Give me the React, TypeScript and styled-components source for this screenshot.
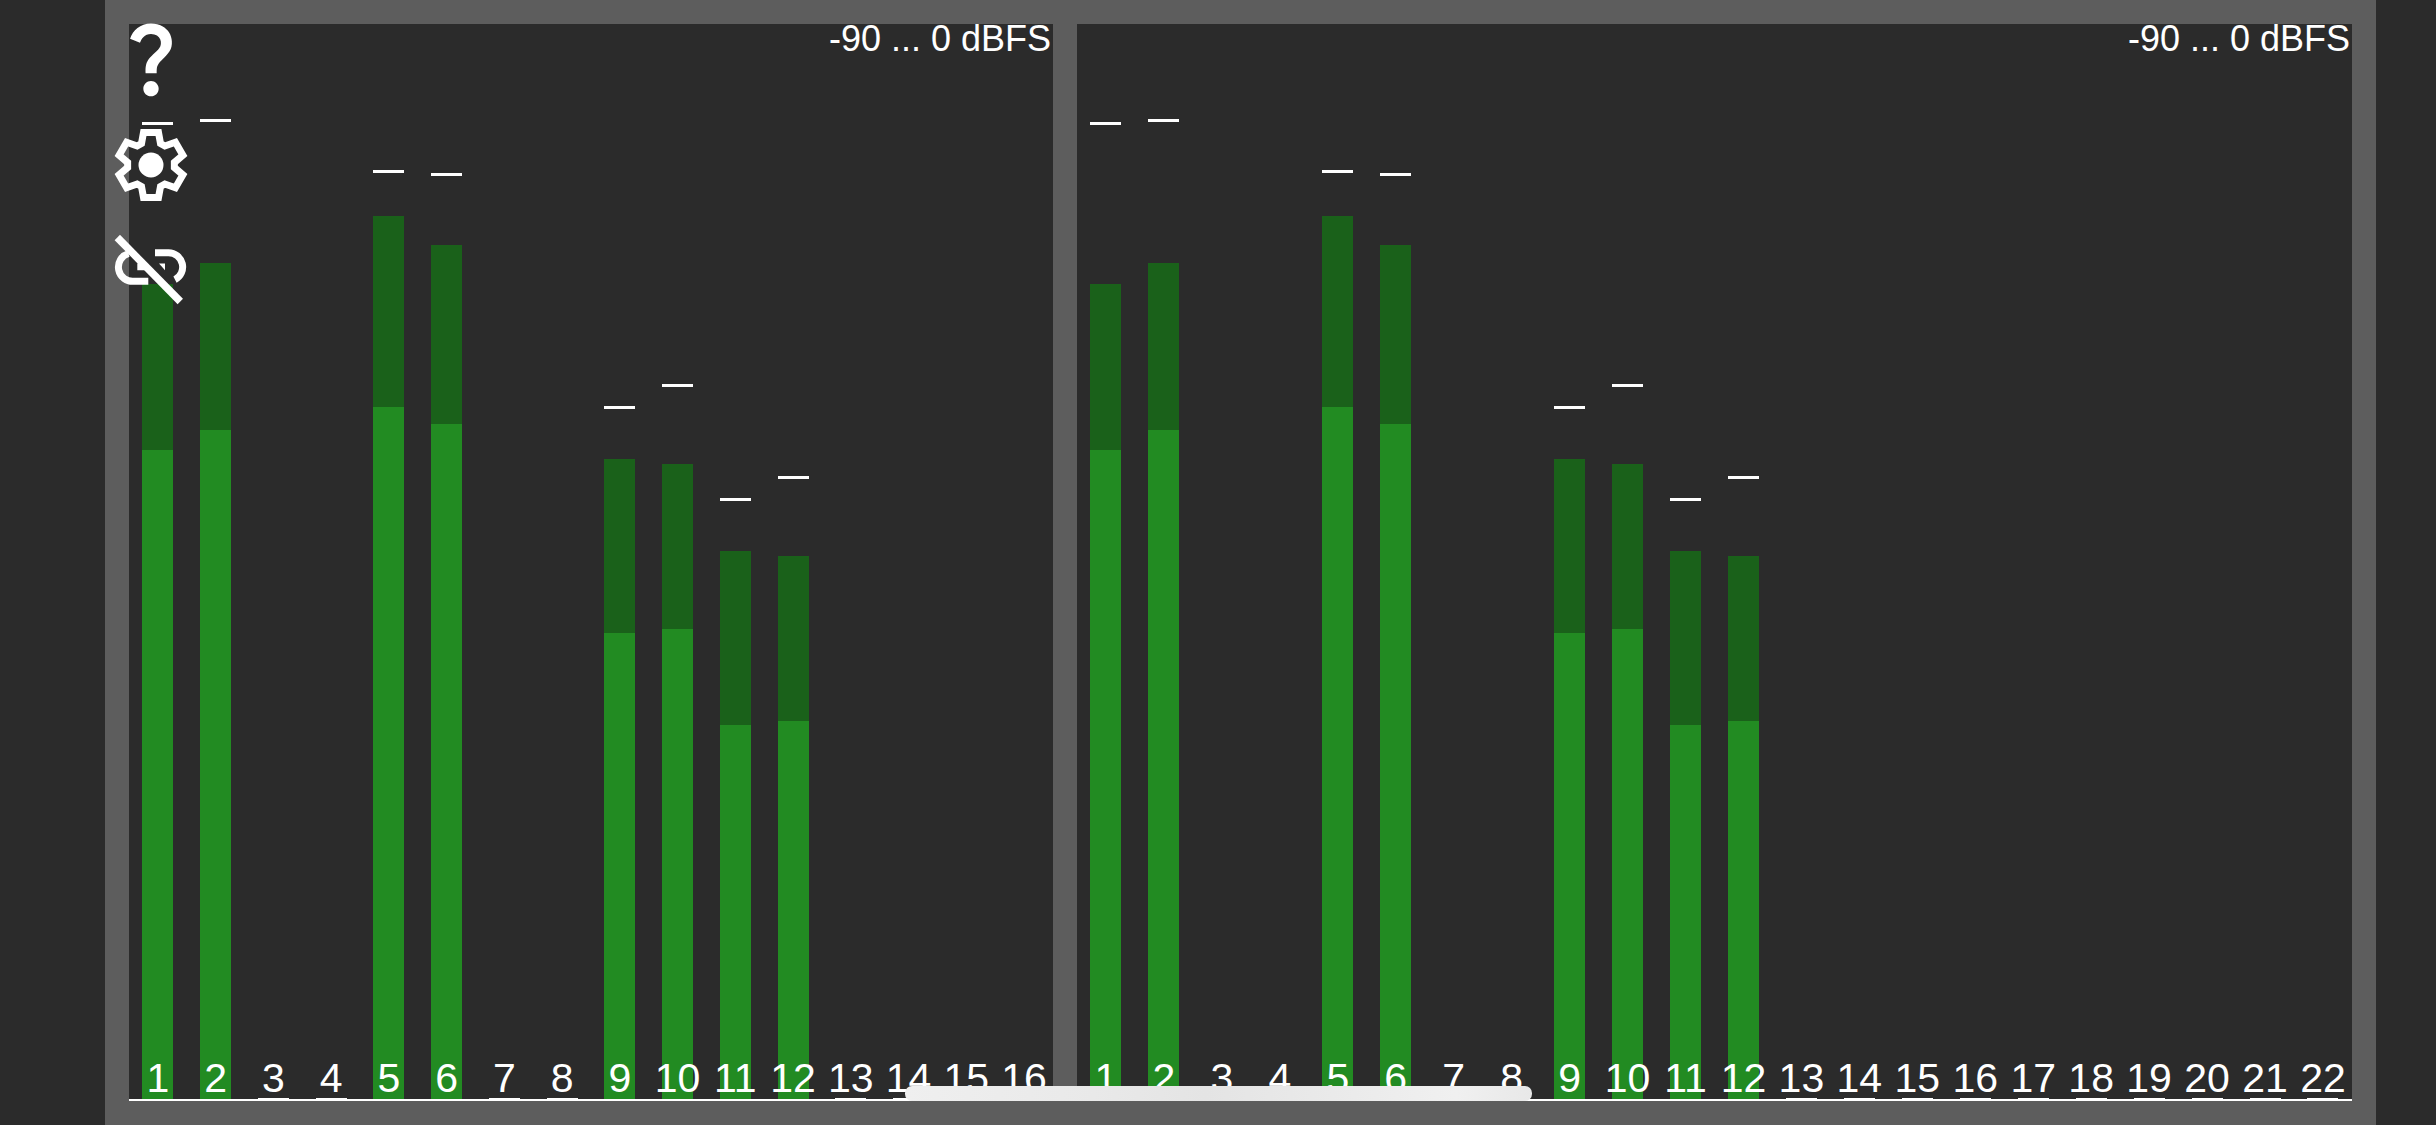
import styled, { createGlobalStyle } from 'styled-components';
import { MdQuestionMark } from 'react-icons/md';

const GlobalStyle = createGlobalStyle`
  html, body {
    margin: 0;
    height: 100%;
    background: #2b2b2b;
    overflow: hidden;
  }
`;

const Page = styled.div`
  position: relative;
  width: 2436px;
  height: 1125px;
  background: #2b2b2b;
  font-family: "Liberation Sans", Arial, sans-serif;
  color: #ffffff;
`;

const Frame = styled.div`
  position: relative;
  display: flex;
  gap: 24px;
  width: 2271px;
  height: 1125px;
  margin-left: 105px;
  padding: 24px;
  box-sizing: border-box;
  background: #5d5d5d;
`;

const Panel = styled.div<{ $width: number }>`
  position: relative;
  display: flex;
  width: ${props => props.$width}px;
  height: 100%;
  box-sizing: border-box;
  background: #2b2b2b;
  border-bottom: 2px solid #ffffff;
`;

const Range = styled.div`
  position: absolute;
  top: -6px;
  right: 2px;
  font-size: 36px;
  line-height: 42px;
  white-space: nowrap;
`;

const Channel = styled.div`
  position: relative;
  flex: 1 1 0;
  display: flex;
  flex-direction: column;
  justify-content: flex-end;
  align-items: center;
`;

const PeakTick = styled.div<{ $idle?: boolean }>`
  width: 31px;
  height: 3px;
  background: #ffffff;
  margin-bottom: ${props => (props.$idle ? '-2px' : '0')};
`;

const HoldBar = styled.div`
  width: 31px;
  background: #1a611a;
`;

const LevelBar = styled.div`
  width: 31px;
  background: #228b22;
`;

const ChannelLabel = styled.div`
  position: absolute;
  left: 50%;
  bottom: -3px;
  transform: translateX(-50%);
  font-size: 41px;
  line-height: 47px;
  white-space: nowrap;
`;

const IconRail = styled.div`
  position: absolute;
  top: 12px;
  left: 107px;
  width: 88px;
  display: flex;
  flex-direction: column;
  align-items: center;
`;

const IconButton = styled.div<{ $offset: number }>`
  display: flex;
  margin-top: ${props => props.$offset}px;
  color: #ffffff;
`;

const ScrollThumb = styled.div`
  position: absolute;
  left: 905px;
  top: 1086px;
  width: 627px;
  height: 15px;
  border-radius: 7px;
  background: linear-gradient(90deg, #efefef 0%, #e9e9e9 30%, #e4e4e4 48%, #ececec 75%, #f0f0f0 88%, #e8e8e8 100%);
`;

// y positions read off the meter: peak tick, top of hold bar, top of level bar
const levels: Record<number, { peak: number; hold: number; level: number }> = {
  1: { peak: 123, hold: 284, level: 450 },
  2: { peak: 120, hold: 263, level: 430 },
  5: { peak: 171, hold: 216, level: 407 },
  6: { peak: 174, hold: 245, level: 424 },
  9: { peak: 407, hold: 459, level: 633 },
  10: { peak: 385, hold: 464, level: 629 },
  11: { peak: 499, hold: 551, level: 725 },
  12: { peak: 477, hold: 556, level: 721 },
};

const METER_BOTTOM = 1099;

const gearPoints = () => {
  const tooth = [[-9.5, -21.5], [-7.5, -32.5], [7.5, -32.5], [9.5, -21.5]];
  const points: string[] = [];
  for (let i = 0; i < 6; i++) {
    const a = (i * Math.PI) / 3;
    for (const [x, y] of tooth) {
      const px = x * Math.cos(a) - y * Math.sin(a) + 43;
      const py = x * Math.sin(a) + y * Math.cos(a) + 43;
      points.push(`${px.toFixed(2)},${py.toFixed(2)}`);
    }
  }
  return points.join(' ');
};

function GearIcon() {
  return (
    <svg width="86" height="86" viewBox="0 0 86 86">
      <polygon points={gearPoints()} fill="none" stroke="#ffffff" strokeWidth="7" strokeMiterlimit="4" />
      <circle cx="43" cy="43" r="12.5" fill="#ffffff" />
    </svg>
  );
}

function UnlinkIcon() {
  return (
    <svg width="86" height="86" viewBox="0 0 86 86" fill="none" stroke="#ffffff" strokeWidth="7">
      <path d="M20.5 29.5A14.2 14.2 0 0 0 26.2 57.2H40.3" />
      <path d="M47 28.8H60.5A14.2 14.2 0 0 1 67 55.6" />
      <path d="M9.3 13.5L72.3 77.5" strokeWidth="7.5" />
      <polygon points="29.3,39.5 33.7,39.5 38.7,46.2 29.3,46.2" fill="#ffffff" stroke="none" />
      <polygon points="51,39.5 57,39.5 57,46.2" fill="#ffffff" stroke="none" />
    </svg>
  );
}

function Meter({ width, channels }: { width: number; channels: number }) {
  return (
    <Panel $width={width}>
      {Array.from({ length: channels }, (_, i) => i + 1).map((n) => {
        const data = levels[n];
        return (
          <Channel key={n}>
            {data ? (
              <>
                <PeakTick style={{ marginBottom: data.hold - data.peak - 2 }} />
                <HoldBar style={{ height: data.level - data.hold }} />
                <LevelBar style={{ height: METER_BOTTOM - data.level }} />
              </>
            ) : (
              <PeakTick $idle />
            )}
            <ChannelLabel>{n}</ChannelLabel>
          </Channel>
        );
      })}
      <Range>-90 ... 0 dBFS</Range>
    </Panel>
  );
}

export default function App() {
  return (
    <Page>
      <GlobalStyle />
      <Frame>
        <Meter width={924} channels={16} />
        <Meter width={1275} channels={22} />
      </Frame>
      <IconRail>
        <IconButton $offset={0}>
          <MdQuestionMark size={92} />
        </IconButton>
        <IconButton $offset={18}>
          <GearIcon />
        </IconButton>
        <IconButton $offset={16}>
          <UnlinkIcon />
        </IconButton>
      </IconRail>
      <ScrollThumb />
    </Page>
  );
}
